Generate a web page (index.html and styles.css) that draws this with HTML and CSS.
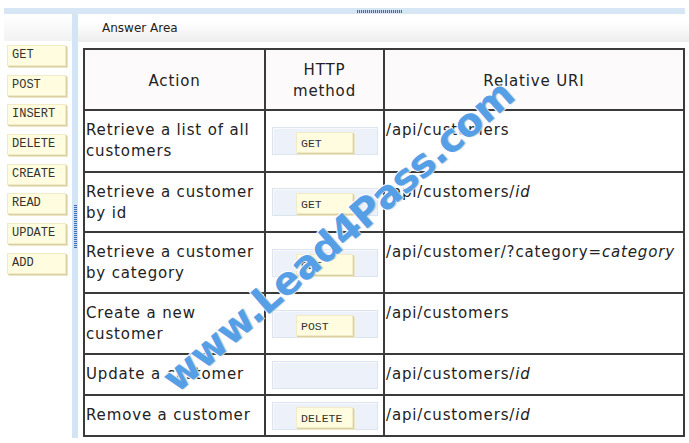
FILE: index.html
```html
<!DOCTYPE html>
<html>
<head>
<meta charset="utf-8">
<link rel="stylesheet" href="styles.css">
</head>
<body>
<div class="page">
  <div class="topbar"><span class="grip-h"></span></div>
  <div class="main">
    <aside class="palette">
      <div class="palette-head"></div>
      <div class="chips">
        <div class="chip">GET</div>
        <div class="chip">POST</div>
        <div class="chip">INSERT</div>
        <div class="chip">DELETE</div>
        <div class="chip">CREATE</div>
        <div class="chip">READ</div>
        <div class="chip">UPDATE</div>
        <div class="chip">ADD</div>
      </div>
    </aside>
    <div class="splitter"><span class="grip-v"></span></div>
    <section class="answer">
      <div class="answer-head">Answer Area</div>
      <table class="grid">
        <colgroup><col class="c1"><col class="c2"><col class="c3"></colgroup>
        <thead>
          <tr class="r-head"><th>Action</th><th>HTTP<br>method</th><th>Relative URI</th></tr>
        </thead>
        <tbody>
          <tr class="r1"><td>Retrieve a list of all<br>customers</td><td class="mid"><div class="slot"><div class="chip small">GET</div></div></td><td>/api/customers</td></tr>
          <tr class="r2"><td>Retrieve a customer<br>by id</td><td class="mid"><div class="slot"><div class="chip small">GET</div></div></td><td>/api/customers/<i>id</i></td></tr>
          <tr class="r3"><td>Retrieve a customer<br>by category</td><td class="mid"><div class="slot"><div class="chip small">GET</div></div></td><td>/api/customer/?category=<i>category</i></td></tr>
          <tr class="r4"><td>Create a new<br>customer</td><td class="mid"><div class="slot"><div class="chip small">POST</div></div></td><td>/api/customers</td></tr>
          <tr class="r5"><td>Update a customer</td><td class="mid"><div class="slot"></div></td><td>/api/customers/<i>id</i></td></tr>
          <tr class="r6"><td>Remove a customer</td><td class="mid"><div class="slot"><div class="chip small">DELETE</div></div></td><td>/api/customers/<i>id</i></td></tr>
        </tbody>
      </table>
    </section>
  </div>
  <div class="watermark">www.Lead4Pass.com</div>
</div>
</body>
</html>
```

FILE: styles.css
```css
* { box-sizing: border-box; }
html, body { margin: 0; padding: 0; background: #fff; }
body { font-family: "DejaVu Sans", Verdana, sans-serif; color: #222; }

.page {
  position: relative;
  width: 689px;
  height: 443px;
  overflow: hidden;
  padding-top: 8px;
}

.topbar {
  margin: 0 4px;
  height: 6px;
  background: #d6e6f5;
  display: flex;
  align-items: center;
}
.grip-h {
  margin-left: 353px;
  width: 45px;
  height: 3px;
  background: repeating-linear-gradient(90deg, #3d6fae 0 1px, #c4d8ee 1px 2px);
}

.main {
  display: flex;
  margin-left: 4px;
  height: 429px;
}

.palette { width: 68px; }
.palette-head {
  height: 27px;
  background: linear-gradient(#ffffff, #f2f2f2);
}
.chips {
  display: flex;
  flex-direction: column;
  gap: 8.7px;
  padding: 4px 0 0 3px;
}

.chip {
  width: 59px;
  height: 21px;
  padding: 3px 0 0 4px;
  background: #fffcdf;
  border: 1px solid #f1ebc8;
  box-shadow: 1px 1px 0 #d9d1a3, 2px 2px 0 #ece6c6;
  font-family: "Liberation Mono", "Courier New", monospace;
  font-size: 12px;
  line-height: 13px;
  color: #333;
}
.chip.small {
  width: 57px;
  font-size: 11.5px;
  padding: 4px 0 0 4px;
}

.splitter {
  width: 6px;
  height: 424px;
  background: #d3e4f5;
  display: flex;
  align-items: center;
  justify-content: center;
}
.grip-v {
  width: 3px;
  height: 43px;
  background: repeating-linear-gradient(180deg, #3d6fae 0 1px, #c4d8ee 1px 2px);
}

.answer { flex: 1; }
.answer-head {
  height: 28px;
  line-height: 28px;
  padding-left: 24px;
  font-size: 12px;
  color: #222;
  background: linear-gradient(#ffffff 30%, #ededed);
}

.grid {
  margin: 6px 0 0 5px;
  width: 600px;
  table-layout: fixed;
  border-collapse: collapse;
  border: 2px solid #3a3a3a;
  font-size: 15px;
  letter-spacing: 0.85px;
  line-height: 21px;
  color: #222;
}
.c1 { width: 181px; }
.c2 { width: 119px; }
.c3 { width: 300px; }

.grid th, .grid td {
  border: 2px solid #3a3a3a;
  padding: 0 1px;
}
.grid th {
  font-weight: normal;
  background: #fdfafc;
  text-align: center;
  vertical-align: middle;
  padding-top: 3px;
}
.grid td {
  vertical-align: top;
  padding-top: 9px;
  background: #fff;
}
.grid td.mid {
  vertical-align: middle;
  padding: 0;
}
.grid i { font-style: italic; }

.r-head { height: 61px; }
.r1 { height: 62px; }
.r2 { height: 60px; }
.r3 { height: 61px; }
.r4 { height: 61px; }
.r5 { height: 41px; }
.r6 { height: 41px; }

.slot {
  width: 106px;
  height: 28px;
  margin: 0 auto;
  background: #edf2fa;
  border: 1px solid #dbe4ef;
  box-shadow: inset 1px 1px 0 #f7f9fd;
  display: flex;
  justify-content: center;
  align-items: flex-start;
  padding-top: 4px;
  letter-spacing: 0;
}

.watermark {
  position: absolute;
  left: 338px;
  top: 236px;
  transform: translate(-50%, -50%) rotate(-41deg);
  font-family: "DejaVu Sans", sans-serif;
  font-weight: bold;
  font-size: 39px;
  letter-spacing: -0.5px;
  color: #559fe6;
  -webkit-text-stroke: 2px #ffffff;
  paint-order: stroke fill;
  white-space: nowrap;
  text-shadow: 1px 1px 1px rgba(60,90,140,0.3);
}
```
